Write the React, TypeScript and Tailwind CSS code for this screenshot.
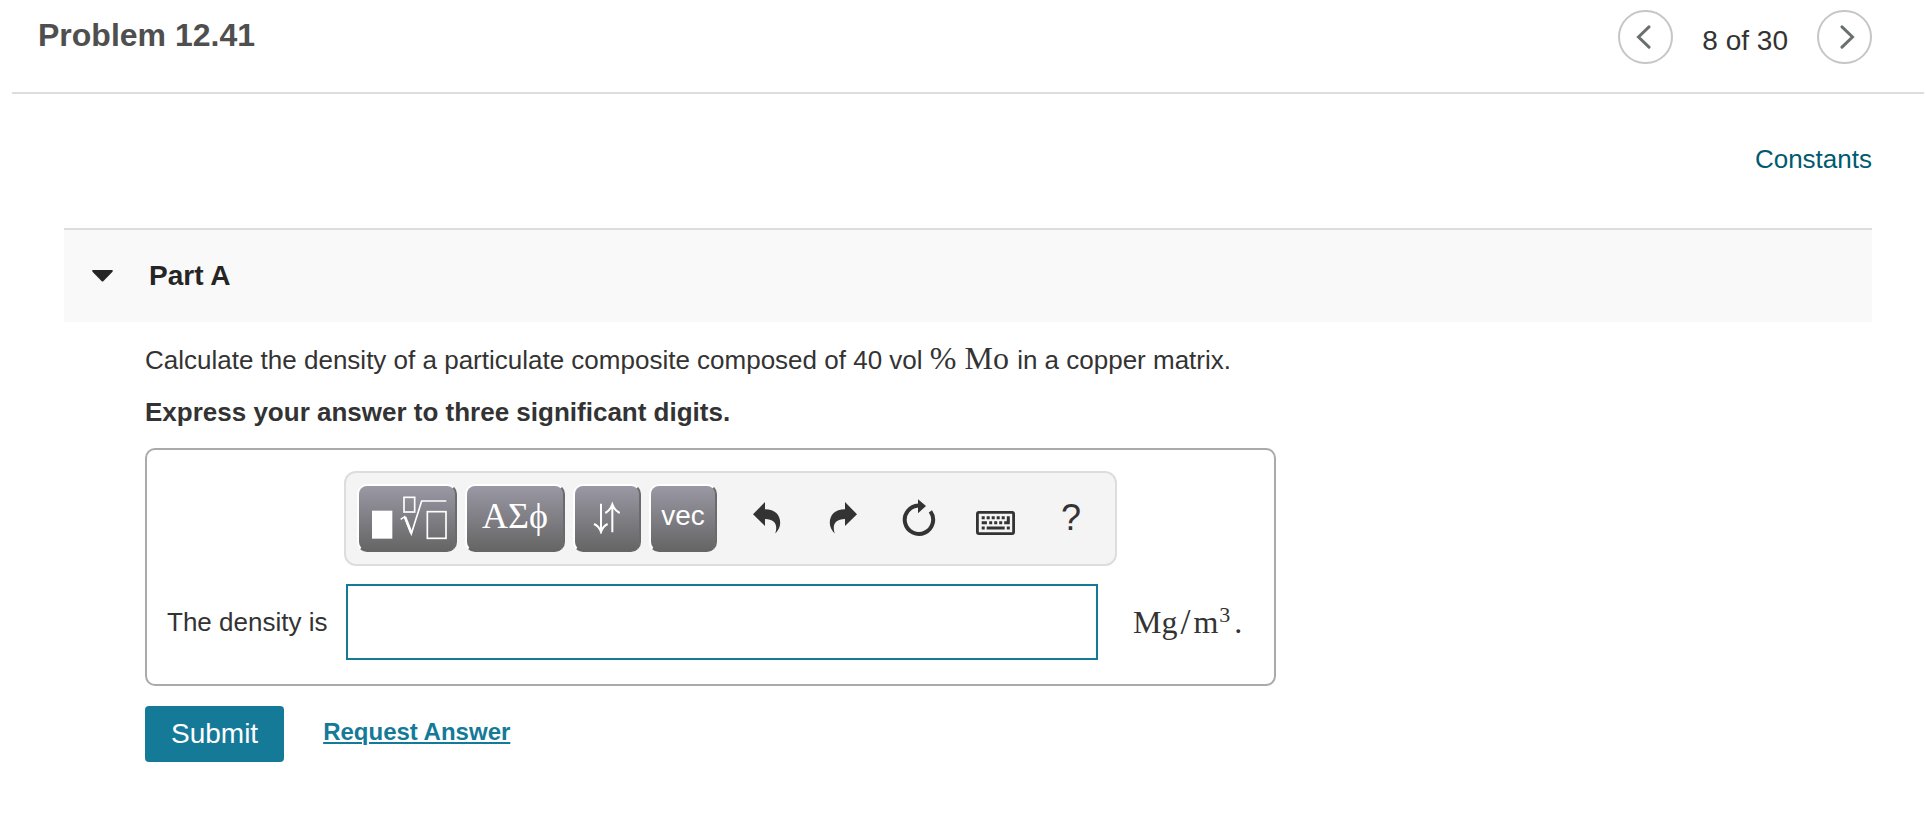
import type { ReactNode } from "react";

function PagerButton({ label, children }: { label: string; children: ReactNode }) {
  return (
    <button
      type="button"
      aria-label={label}
      className="flex h-[54px] w-[55px] items-center justify-center rounded-full border-2 border-[#c6c6c6] bg-white text-[#6a7070]"
    >
      {children}
    </button>
  );
}

function PaletteButton({
  label,
  wide = false,
  children
}: {
  label: string;
  wide?: boolean;
  children: ReactNode;
}) {
  return (
    <button
      type="button"
      aria-label={label}
      className={`flex h-[68px] shrink-0 items-center justify-center rounded-[10px] border-2 border-t-white border-r-[#6b6b6b] border-b-[#666666] border-l-white bg-linear-to-b from-[#9a98a4] to-[#666666] text-white ${
        wide ? "w-[100px]" : "w-[68px]"
      }`}
    >
      {children}
    </button>
  );
}

function ToolButton({ label, children }: { label: string; children: ReactNode }) {
  return (
    <button
      type="button"
      aria-label={label}
      className="flex h-[68px] w-[76px] items-center justify-center text-[#333333]"
    >
      {children}
    </button>
  );
}

function Chevron({ flipped = false }: { flipped?: boolean }) {
  return (
    <svg
      width="24"
      height="24"
      viewBox="0 0 24 24"
      fill="none"
      stroke="currentColor"
      strokeWidth="3"
      strokeLinecap="round"
      className={flipped ? "-scale-x-100" : ""}
    >
      <path d="M15 1.8 L4.5 12 L15 22.2" />
    </svg>
  );
}

function TemplateIcon() {
  return (
    <svg width="78" height="46" viewBox="92 104 234 138" fill="none" stroke="currentColor" strokeWidth="5">
      <rect x="98" y="151" width="61" height="84" fill="currentColor" stroke="none" />
      <rect x="194" y="111" width="32" height="44" />
      <rect x="264" y="154" width="56" height="80" />
      <path d="M184 177 L196 169 L216 220 L247 122 H321" />
      <path d="M197 170 L216 218" strokeWidth="8" />
    </svg>
  );
}

function SortArrowsIcon() {
  return (
    <svg width="28" height="32" viewBox="760 131 84 94" fill="none" stroke="currentColor" strokeWidth="6">
      <path d="M784 135 V218 M763 196 Q778 202 784 220 Q790 202 804 196" />
      <path d="M818 221 V139 M797 163 Q812 155 818 137 Q824 155 840 163" />
    </svg>
  );
}

function UndoIcon({ flipped = false }: { flipped?: boolean }) {
  return (
    <svg
      width="28"
      height="32"
      viewBox="0 0 28 32"
      fill="currentColor"
      className={flipped ? "-scale-x-100" : ""}
    >
      <path d="M0 12.3 L12 0 V7.3 C22 7.3 27.2 13 27.2 21 C27.2 25 25 29 22.3 31.5 C25 23 22 17 12 17 V24 Z" />
    </svg>
  );
}

function ResetIcon() {
  return (
    <svg width="34" height="38" viewBox="0 0 34 38" fill="none">
      <path d="M28.4 12.4 A14.2 14.2 0 1 1 16.5 6.6" stroke="currentColor" strokeWidth="4" />
      <path d="M16 0.3 L24 7 L16 14.3 Z" fill="currentColor" />
    </svg>
  );
}

function KeyboardIcon() {
  return (
    <svg width="39" height="24" viewBox="0 0 39 24" fill="none">
      <rect x="1.4" y="1.4" width="36.2" height="21.2" rx="1.5" stroke="currentColor" strokeWidth="2.8" />
      <path
        fill="currentColor"
        d="M5.7 5.3h3v3h-3zM10.7 5.3h3v3h-3zM15.7 5.3h3v3h-3zM20.7 5.3h3v3h-3zM25.7 5.3h3v3h-3zM30.8 5.3h3v8h-5.6v-3h2.6zM5.7 10.3h5.2v3h-5.2zM13.2 10.3h3v3h-3zM18.2 10.3h3v3h-3zM23.2 10.3h3v3h-3zM5.7 15.5h3v3h-3zM10.7 15.5h18v3h-18zM30.8 15.5h3v3h-3z"
      />
    </svg>
  );
}

function EquationToolbar() {
  return (
    <div className="-ml-0.5 flex w-fit items-center rounded-xl border-2 border-[#dddddd] bg-[#f4f4f4] pt-[11px] pr-1.5 pb-3 pl-[11px]">
      <div className="flex gap-2">
        <PaletteButton label="Templates" wide>
          <span className="pl-1">
            <TemplateIcon />
          </span>
        </PaletteButton>
        <PaletteButton label="Greek symbols" wide>
          <span className="pb-1 font-['Liberation_Serif',serif] text-[36px] leading-10">ΑΣϕ</span>
        </PaletteButton>
        <PaletteButton label="Arrows">
          <SortArrowsIcon />
        </PaletteButton>
        <PaletteButton label="Vector">
          <span className="pb-1 text-[28px] leading-8">vec</span>
        </PaletteButton>
      </div>
      <div className="ml-3 flex">
        <ToolButton label="Undo">
          <UndoIcon />
        </ToolButton>
        <ToolButton label="Redo">
          <UndoIcon flipped />
        </ToolButton>
        <ToolButton label="Reset">
          <ResetIcon />
        </ToolButton>
        <ToolButton label="Keyboard shortcuts">
          <span className="pt-2.5">
            <KeyboardIcon />
          </span>
        </ToolButton>
        <ToolButton label="Help">
          <span className="text-[36px] leading-10">?</span>
        </ToolButton>
      </div>
    </div>
  );
}

export default function App() {
  return (
    <div className="min-h-screen bg-white font-['Liberation_Sans',Arial,sans-serif] text-[26px] leading-8 text-[#333333]">
      <header className="mr-0.5 ml-3 flex h-[94px] items-start justify-between border-b-2 border-[#dddddd] pr-[52px] pl-[26px]">
        <h1 className="pt-[15px] text-[32px] leading-10 font-bold text-[#4f4f4f]">Problem 12.41</h1>
        <nav className="flex items-center gap-[29px] pt-2.5" aria-label="Problems">
          <PagerButton label="Previous problem">
            <Chevron />
          </PagerButton>
          <span className="pt-2 text-[28px] leading-8">8 of 30</span>
          <PagerButton label="Next problem">
            <Chevron flipped />
          </PagerButton>
        </nav>
      </header>

      <main className="pr-[54px] pl-16">
        <div className="flex justify-end pt-[49px]">
          <a href="#constants" className="text-[#005a70]">
            Constants
          </a>
        </div>

        <section className="mt-[53px]">
          <h2 className="border-t-2 border-[#dddddd] bg-[#f9f9f9]">
            <button
              type="button"
              aria-expanded="true"
              className="flex h-[92px] w-full items-center pl-7 text-[28px] font-bold text-[#252525]"
            >
              <svg width="21" height="12" viewBox="0 0 21 12" fill="currentColor" className="mr-9">
                <path d="M1 0 H20 Q21.5 0.5 20.3 2 L11.5 11 Q10.5 12 9.5 11 L0.7 2 Q-0.5 0.5 1 0 Z" />
              </svg>
              Part A
            </button>
          </h2>

          <div className="pt-[22px] pl-[81px]">
            <p>
              Calculate the density of a particulate composite composed of 40 vol{" "}
              <span className="pr-px font-['Liberation_Serif',serif] text-[32px] leading-0">% Mo</span>{" "}
              in a copper matrix.
            </p>
            <p className="mt-5 font-bold">Express your answer to three significant digits.</p>

            <form onSubmit={(event) => event.preventDefault()}>
              <div className="mt-5 grid w-full max-w-[1131px] grid-cols-[179px_1fr] rounded-[10px] border-2 border-[#aaaaaa] pt-[21px] pb-6 pl-5">
                <div className="col-start-2">
                  <EquationToolbar />
                </div>
                <label htmlFor="density" className="mt-[18px] self-center">
                  The density is
                </label>
                <div className="mt-[18px] flex items-center gap-[35px]">
                  <input
                    id="density"
                    type="text"
                    className="h-[76px] w-[752px] border-2 border-[#147a98] bg-white px-4 outline-none"
                  />
                  <span className="flex font-['Liberation_Serif',serif] text-[32px] leading-10">
                    Mg<span className="px-[3px] text-[36px]">/</span>m
                    <sup className="static pt-px pl-px text-[22px] leading-6">3</sup>
                    <span className="pl-1">.</span>
                  </span>
                </div>
              </div>

              <div className="mt-5 flex items-center gap-[39px]">
                <button
                  type="submit"
                  className="h-14 rounded bg-[#147a98] px-[26px] text-[28px] leading-8 text-white"
                >
                  Submit
                </button>
                <a
                  href="#answer"
                  className="pb-1 text-[24px] leading-8 font-bold text-[#147a98] underline decoration-2 underline-offset-2"
                >
                  Request Answer
                </a>
              </div>
            </form>
          </div>
        </section>
      </main>
    </div>
  );
}
